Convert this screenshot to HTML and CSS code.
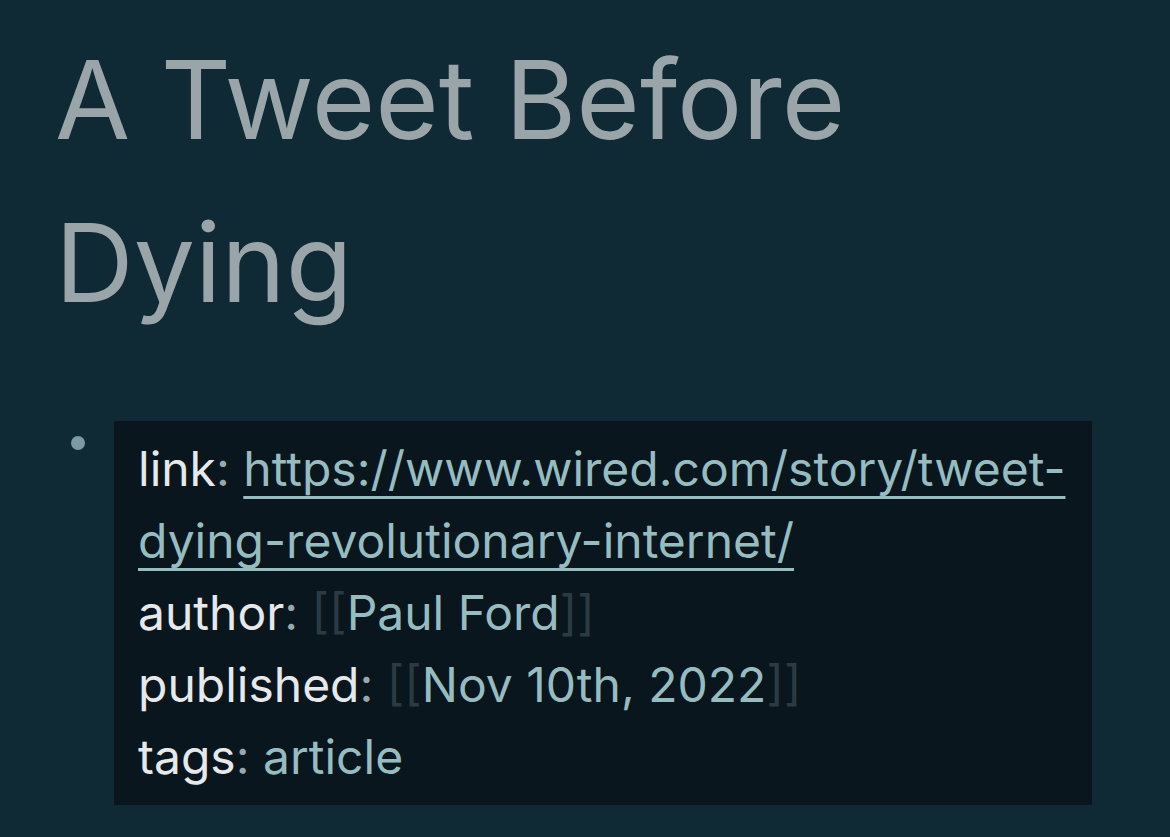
FILE: index.html
```html
<!DOCTYPE html>
<html lang="en">
<head>
<meta charset="utf-8">
<title>A Tweet Before Dying</title>
<link rel="stylesheet" href="styles.css">
</head>
<body>
<main class="page">
  <h1 class="title">A Tweet Before Dying</h1>
  <div class="block">
    <div class="bullet-col"><span class="bullet"></span></div>
    <div class="props">
      <div class="prop"><span class="key">link</span><span class="colon">: </span><a class="link" href="#">https://www.wired.com/story/tweet-dying-revolutionary-internet/</a></div>
      <div class="prop"><span class="key">author</span><span class="colon">: </span><span class="br">[[</span><span class="ref">Paul Ford</span><span class="br">]]</span></div>
      <div class="prop"><span class="key">published</span><span class="colon">: </span><span class="br">[[</span><span class="ref">Nov 10th, 2022</span><span class="br">]]</span></div>
      <div class="prop"><span class="key">tags</span><span class="colon">: </span><span class="ref">article</span></div>
    </div>
  </div>
</main>
</body>
</html>
```
FILE: styles.css
```css
html, body {
  margin: 0;
  padding: 0;
  background: #0f2935;
  height: 100%;
}
body {
  font-family: "Inter", "Noto Sans", sans-serif;
  overflow: hidden;
}
.page {
  padding: 18px 0 0 57px;
}
.title {
  margin: 0 0 0 -2px;
  font-weight: 400;
  font-size: 109px;
  line-height: 163px;
  color: #9aa5a9;
  width: 900px;
}
.block {
  display: flex;
  margin-top: 77px;
}
.bullet-col {
  width: 57px;
  flex: none;
}
.bullet {
  display: block;
  width: 14px;
  height: 14px;
  border-radius: 50%;
  background: #7b9aa2;
  margin: 15px 0 0 14px;
}
.props {
  background: #09161e;
  width: 930px;
  padding: 12px 24px 12px 24px;
  font-size: 48px;
  line-height: 72px;
}
.key {
  color: #e6e8ea;
}
.colon {
  color: #9aa8ac;
}
.link {
  color: #97bcc0;
  text-decoration: underline;
  text-decoration-thickness: 3px;
  text-underline-offset: 10px;
}
.ref {
  color: #97bcc0;
}
.br {
  color: #2c3b43;
}
```
